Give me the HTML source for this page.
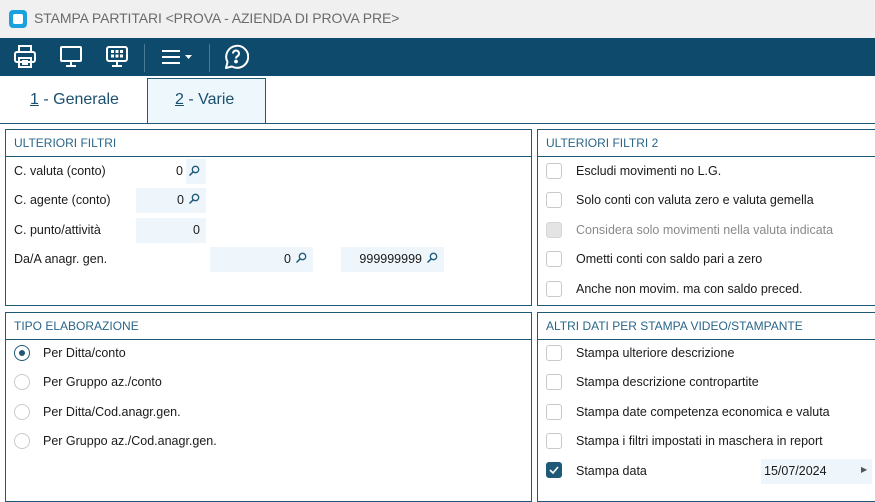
<!DOCTYPE html>
<html><head><meta charset="utf-8"><style>
*{box-sizing:border-box;margin:0;padding:0}
body{width:875px;height:488px;overflow:hidden;background:#fff;font-family:"Liberation Sans","DejaVu Sans",sans-serif;font-size:12.5px;color:#1a1a1a;position:relative}
.abs{position:absolute}
.title{left:0;top:0;width:875px;height:38px;background:#f0f0f0}
.title .t{left:34px;top:10px;font-size:14px;color:#6b6b6b;letter-spacing:-0.1px}
.tb{left:0;top:38px;width:875px;height:38px;background:#0e4a6b}
.sep{top:44px;width:1px;height:28px;background:#4c7a93}
.tab{top:100px;font-size:16px;color:#1a4f6e}
.panel{border:1px solid #1e5a78}
.ph{left:0;right:0;top:0;height:27px;border-bottom:1px solid #1e5a78;color:#2a6688;font-size:12px;padding:6px 0 0 8px}
.lbl{font-size:12.5px}
.inp{background:#eef5fb;height:25px;text-align:right;padding:5px 6px 0 0}
.cb{width:16px;height:16px;border:1.5px solid #c9c9c9;border-radius:3px;background:#fff}
.rd{width:16px;height:16px;border:1.5px solid #c9c9c9;border-radius:50%}
.mg{display:inline-block;width:12px;height:12px;vertical-align:-1px;margin-left:4px}
</style></head><body>
<svg width="0" height="0" style="position:absolute"><defs><symbol id="mg" viewBox="0 0 12 12"><circle cx="7.5" cy="4.5" r="3.2" fill="none" stroke="#1e5a78" stroke-width="1.3"/><line x1="5.2" y1="6.8" x2="1.5" y2="10.5" stroke="#1e5a78" stroke-width="1.5"/></symbol></defs></svg>
<div class="abs title">
<div class="abs" style="left:9px;top:10px;width:18px;height:18px;background:#19a1dd;border-radius:4px"><div class="abs" style="left:4px;top:4px;width:10px;height:10px;background:#fff;border-radius:2px"></div></div>
<div class="abs t">STAMPA PARTITARI &lt;PROVA - AZIENDA DI PROVA PRE&gt;</div>
</div>
<div class="abs tb">
<svg class="abs" style="left:12px;top:6px" width="26" height="26" viewBox="0 0 26 26" fill="none" stroke="#fff" stroke-width="2"><rect x="7" y="2" width="12" height="6"/><rect x="3" y="8" width="20" height="10" rx="2"/><rect x="7" y="14" width="12" height="9"/><line x1="10" y1="17" x2="16" y2="17"/><line x1="10" y1="20" x2="16" y2="20"/></svg>
<svg class="abs" style="left:58px;top:6px" width="26" height="26" viewBox="0 0 26 26" fill="none" stroke="#fff" stroke-width="2"><rect x="3" y="3" width="20" height="14" rx="1"/><line x1="13" y1="17" x2="13" y2="22"/><line x1="8" y1="22" x2="18" y2="22"/></svg>
<svg class="abs" style="left:104px;top:6px" width="26" height="26" viewBox="0 0 26 26" fill="none" stroke="#fff" stroke-width="2"><rect x="3" y="3" width="20" height="14" rx="2"/><line x1="13" y1="17" x2="13" y2="22"/><line x1="8" y1="22" x2="18" y2="22"/><g fill="#fff" stroke="none"><rect x="7" y="6" width="3" height="3"/><rect x="11.5" y="6" width="3" height="3"/><rect x="16" y="6" width="3" height="3"/><rect x="7" y="10.5" width="3" height="3"/><rect x="11.5" y="10.5" width="3" height="3"/><rect x="16" y="10.5" width="3" height="3"/></g></svg>
<div class="abs sep" style="left:144px;top:6px"></div>
<svg class="abs" style="left:160px;top:6px" width="36" height="26" viewBox="0 0 36 26" fill="none" stroke="#fff" stroke-width="2"><line x1="2" y1="7" x2="20" y2="7"/><line x1="2" y1="13" x2="20" y2="13"/><line x1="2" y1="19" x2="20" y2="19"/><path d="M25 11h7l-3.5 4z" fill="#fff" stroke="none"/></svg>
<div class="abs sep" style="left:209px;top:6px"></div>
<svg class="abs" style="left:223px;top:5px" width="26" height="28" viewBox="0 0 26 28" fill="none" stroke="#fff" stroke-width="2" stroke-linejoin="round"><path d="M3 25 L4.5 19 A11 11 0 1 1 9 23.5 Z"/><path d="M10 10.5a3 3 0 1 1 4.5 2.6c-1 .6-1.5 1.2-1.5 2.4"/><circle cx="13" cy="18.5" r="0.9" fill="#fff"/></svg>
</div>
<div class="abs" style="left:147px;top:78px;width:119px;height:46px;background:#eef7fc;border:1px solid #1e5a78;border-bottom:none"></div>
<div class="abs tab" style="left:30px;top:91px"><u>1</u> - Generale</div>
<div class="abs tab" style="left:175px;top:91px"><u>2</u> - Varie</div>
<div class="abs" style="left:0;top:123px;width:875px;height:1px;background:#1e5a78"></div>

<div class="abs panel" style="left:5px;top:129px;width:527px;height:177px">
<div class="abs ph">ULTERIORI FILTRI</div>
</div>
<div class="abs lbl" style="left:14px;top:164px">C. valuta (conto)</div>
<div class="abs inp" style="left:186px;top:159px;width:20px;padding:6px 0 0 0;text-align:left"><svg class="mg" style="margin-left:2px"><use href="#mg"/></svg></div>
<div class="abs" style="left:176px;top:164px">0</div>
<div class="abs lbl" style="left:14px;top:193px">C. agente (conto)</div>
<div class="abs inp" style="left:136px;top:188px;width:70px">0<svg class="mg"><use href="#mg"/></svg></div>
<div class="abs lbl" style="left:14px;top:223px">C. punto/attività</div>
<div class="abs inp" style="left:136px;top:218px;width:70px">0</div>
<div class="abs lbl" style="left:14px;top:252px">Da/A anagr. gen.</div>
<div class="abs inp" style="left:210px;top:247px;width:103px">0<svg class="mg"><use href="#mg"/></svg></div>
<div class="abs inp" style="left:341px;top:247px;width:103px">999999999<svg class="mg"><use href="#mg"/></svg></div>

<div class="abs panel" style="left:537px;top:129px;width:345px;height:177px">
<div class="abs ph">ULTERIORI FILTRI 2</div>
</div>
<div class="abs cb" style="left:546px;top:163px"></div><div class="abs lbl" style="left:576px;top:164px">Escludi movimenti no L.G.</div>
<div class="abs cb" style="left:546px;top:192px"></div><div class="abs lbl" style="left:576px;top:193px">Solo conti con valuta zero e valuta gemella</div>
<div class="abs cb" style="left:546px;top:222px;background:#e4e4e4;border-color:#d6d6d6"></div><div class="abs lbl" style="left:576px;top:223px;color:#8a8a8a">Considera solo movimenti nella valuta indicata</div>
<div class="abs cb" style="left:546px;top:251px"></div><div class="abs lbl" style="left:576px;top:252px">Ometti conti con saldo pari a zero</div>
<div class="abs cb" style="left:546px;top:281px"></div><div class="abs lbl" style="left:576px;top:282px">Anche non movim. ma con saldo preced.</div>

<div class="abs panel" style="left:5px;top:312px;width:527px;height:190px">
<div class="abs ph">TIPO ELABORAZIONE</div>
</div>
<div class="abs rd" style="left:14px;top:345px;border-color:#1e5a78"><div class="abs" style="left:3.5px;top:3.5px;width:6px;height:6px;border-radius:50%;background:#1e5a78"></div></div><div class="abs lbl" style="left:43px;top:346px">Per Ditta/conto</div>
<div class="abs rd" style="left:14px;top:374px"></div><div class="abs lbl" style="left:43px;top:375px">Per Gruppo az./conto</div>
<div class="abs rd" style="left:14px;top:404px"></div><div class="abs lbl" style="left:43px;top:405px">Per Ditta/Cod.anagr.gen.</div>
<div class="abs rd" style="left:14px;top:433px"></div><div class="abs lbl" style="left:43px;top:434px">Per Gruppo az./Cod.anagr.gen.</div>

<div class="abs panel" style="left:537px;top:312px;width:345px;height:190px">
<div class="abs ph">ALTRI DATI PER STAMPA VIDEO/STAMPANTE</div>
</div>
<div class="abs cb" style="left:546px;top:345px"></div><div class="abs lbl" style="left:576px;top:346px">Stampa ulteriore descrizione</div>
<div class="abs cb" style="left:546px;top:374px"></div><div class="abs lbl" style="left:576px;top:375px">Stampa descrizione contropartite</div>
<div class="abs cb" style="left:546px;top:404px"></div><div class="abs lbl" style="left:576px;top:405px">Stampa date competenza economica e valuta</div>
<div class="abs cb" style="left:546px;top:433px"></div><div class="abs lbl" style="left:576px;top:434px">Stampa i filtri impostati in maschera in report</div>
<div class="abs cb" style="left:546px;top:462px;background:#1e5a78;border-color:#1e5a78"><svg class="abs" style="left:1px;top:1px" width="12" height="12" viewBox="0 0 12 12"><path d="M2 6l3 3 5-6" fill="none" stroke="#fff" stroke-width="1.6"/></svg></div><div class="abs lbl" style="left:576px;top:464px">Stampa data</div>
<div class="abs inp" style="left:761px;top:459px;width:111px;text-align:left;padding-left:3px">15/07/2024<span class="abs" style="left:100px;top:6px;font-size:8px;color:#555">▶</span></div>
</body></html>
